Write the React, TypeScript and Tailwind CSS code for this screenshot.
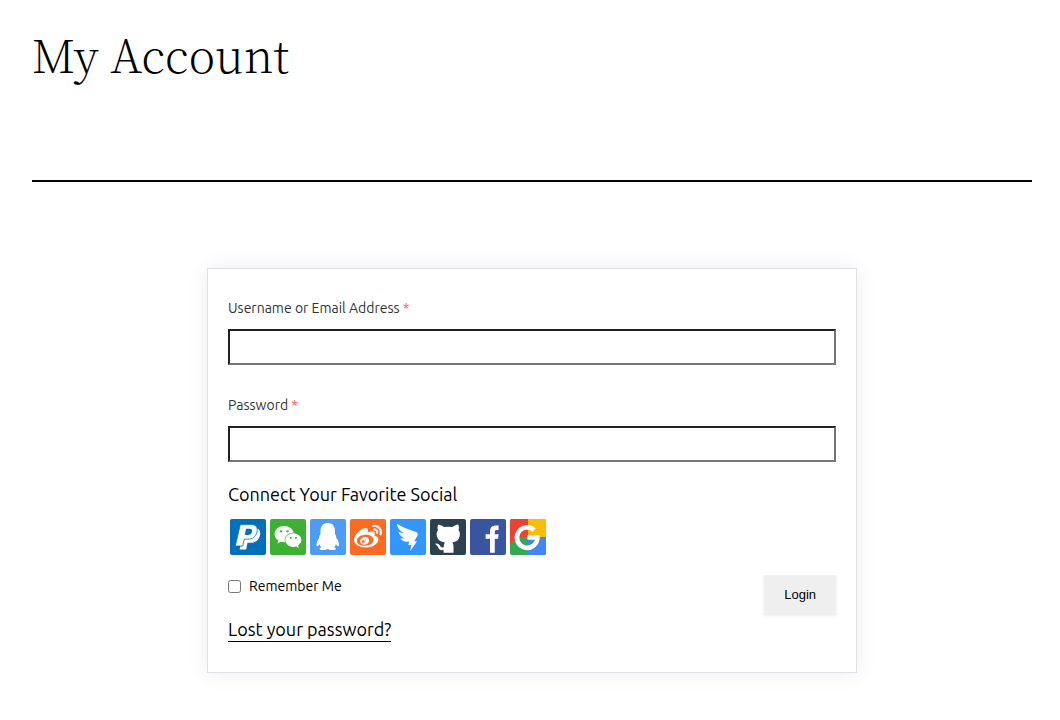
import type { ReactNode } from "react";
import { FaWeibo, FaWeixin } from "react-icons/fa";

function Tile({ name, color, children }: { name: string; color: string; children: ReactNode }) {
  return (
    <a href="#" aria-label={name} className={`block size-9 overflow-hidden rounded-xs ${color}`}>
      {children}
    </a>
  );
}

function SocialLinks() {
  return (
    <div className="flex gap-1 px-0.5">
      <Tile name="PayPal" color="bg-[#0070ba]">
        <svg viewBox="0 0 36 36" className="size-9" fill="#fff">
          <path d="M14.5 9H24C29 9 31 11.6 30 16.3C29 21.5 25.5 23.8 20.5 23.8H17.5L16.2 30.5H9.6Z" />
          <path
            d="M10.3 5.4H20.8C26 5.4 28 8.2 27 12.8C26 18 22.6 20.2 17.5 20.2H14.2L12.8 27H5.3Z"
            stroke="#0070ba"
            strokeWidth="0.8"
          />
          <path d="M16 9.8H19.3C21.7 9.8 22.4 11 22 12.8C21.5 15.2 20.1 16 17.8 16H14.8Z" fill="#0070ba" />
        </svg>
      </Tile>
      <Tile name="WeChat" color="bg-[#3eb135]">
        <div className="flex size-9 items-center justify-center">
          <FaWeixin size={28} color="#fff" />
        </div>
      </Tile>
      <Tile name="QQ" color="bg-[#4c9bf5]">
        <svg viewBox="0 0 36 36" className="size-9" fill="#fff">
          <path d="M17.8 4C22.5 4 25 7.5 25 12V15C26 16.2 26.4 17.5 26.2 18.7C28 21 29 23.3 29 25.5C29 27 28.3 27.7 27.3 26.9L26 25.3C25.6 26.5 25 27.5 24.2 28.3C27 29.6 26.5 31 22.5 31C20.3 31 18.6 30.5 17.8 30C17 30.5 15.2 31 13 31C9 31 8.6 29.6 11.4 28.3C10.5 27.5 9.9 26.5 9.5 25.3L8.2 26.9C7.2 27.7 6.5 27 6.5 25.5C6.5 23.3 7.5 21 9.3 18.7C9.1 17.5 9.5 16.2 10.5 15V12C10.5 7.5 13.1 4 17.8 4Z" />
        </svg>
      </Tile>
      <Tile name="Weibo" color="bg-[#ff6a22]">
        <div className="flex size-9 items-center justify-center">
          <FaWeibo size={28} color="#fff" />
        </div>
      </Tile>
      <Tile name="DingTalk" color="bg-[#3296fa]">
        <svg viewBox="0 0 36 36" className="size-9" fill="#fff">
          <path d="M7.1 4.8C12 8.6 21 11 26.2 13.1C28 13.9 28.1 15.4 27.3 17L24.2 22.3H27L20 32.2L21.4 26H18.2L19.3 22.4C14.6 23.2 12 21.9 10.6 19.5L15 19.2C11.6 18 9.2 15.9 8.4 12.9L14.5 14.4C10 12.2 7 8.9 7.1 4.8Z" />
        </svg>
      </Tile>
      <Tile name="GitHub" color="bg-[#2b414d]">
        <svg viewBox="0 0 36 36" className="size-9" fill="#fff">
          <path d="M8.2 5.5C10.6 5.8 12.7 7 14.2 8.1Q18.2 7.2 22.3 8.1C24 6.9 26 5.8 28.3 5.5C29.2 7.8 29 9.6 28.6 11C30 12.7 30.2 15 29.5 17.8C28.8 21.2 26.2 22.9 22.2 23.5C23.1 24.4 23.5 25.5 23.5 27V33.8H13.6V31C9.7 31.7 8.8 29.7 8 27.9C7.5 26.8 6.8 26.2 5.5 25.4V24.6C8 24.2 9.3 25.4 10.2 27C11 28.4 12.2 28.7 13.7 28.2C13.8 26.4 14 24.5 15 23.5C10.7 22.9 7.9 21.2 7 17.8C6.3 15 6.6 12.7 8 11C7.4 9.3 7.4 7.4 8.2 5.5Z" />
        </svg>
      </Tile>
      <Tile name="Facebook" color="bg-[#3a559f]">
        <svg viewBox="0 0 36 36" className="size-9" fill="#fff">
          <path d="M20 33.7V19.7H15.6V15.3H20V12.5C20 8.5 22.2 6.5 26 6.5H28.6V11H26.5C25.1 11 24.8 11.7 24.8 13V15.3H28.6L28.1 19.7H24.8V33.7Z" />
        </svg>
      </Tile>
      <Tile name="Google" color="bg-[#34a853]">
        <svg viewBox="0 0 36 36" className="size-9">
          <path d="M0 0H18V18H9L0 25Z" fill="#ea4335" />
          <path d="M18 0H36V18H18Z" fill="#fbbc05" />
          <path d="M18 18H36V36H18Z" fill="#4285f4" />
          <path
            d="M24.2 11.2A10.2 10.2 0 1 0 27.4 18.5H17.5"
            fill="none"
            stroke="#fff"
            strokeWidth="4.6"
          />
        </svg>
      </Tile>
    </div>
  );
}

function Field({ id, label, type }: { id: string; label: string; type: string }) {
  return (
    <div className="flex flex-col gap-[9px]">
      <label htmlFor={id} className="text-sm leading-6 text-[#333]">
        {label} <span className="text-[#ff5b5b]">*</span>
      </label>
      <input
        id={id}
        type={type}
        className="h-9 w-full border-2 border-t-[#212121] border-r-[#767676] border-b-[#767676] border-l-[#212121] bg-white px-2 text-base outline-none"
      />
    </div>
  );
}

export default function App() {
  return (
    <div className="bg-white pr-7 pb-12 pl-8 font-['Ubuntu','Noto_Sans',sans-serif] text-black">
      <header className="border-b-2 border-black pt-6 pb-24">
        <h1 className="font-['Source_Serif_Pro','Noto_Serif_CJK_SC','Noto_Serif_CJK_JP','Liberation_Serif',serif] text-[45px] leading-15 font-extralight">
          My Account
        </h1>
      </header>
      <main className="pt-[86px]">
        <form
          onSubmit={(event) => event.preventDefault()}
          className="mx-auto max-w-[650px] border border-[#dfdfec] px-5 pt-[27px] pb-[30px] shadow-[0_0_20px_rgba(0,0,0,0.08)]"
        >
          <div className="flex flex-col gap-7">
            <Field id="username" label="Username or Email Address" type="text" />
            <Field id="password" label="Password" type="password" />
          </div>
          <h2 className="mt-[18px] mb-[11px] text-lg leading-7">Connect Your Favorite Social</h2>
          <SocialLinks />
          <div className="mt-5 flex items-start justify-between">
            <label className="flex items-center gap-2 text-sm leading-[22px]">
              <input type="checkbox" className="size-[13px]" />
              Remember Me
            </label>
            <button
              type="submit"
              className="h-10 bg-[#efefef] px-5 font-['Liberation_Sans',sans-serif] text-[13px] shadow-[0_1px_3px_rgba(0,0,0,0.08)]"
            >
              Login
            </button>
          </div>
          <a href="#" className="mt-0.5 inline-block border-b border-black text-lg leading-6">
            Lost your password?
          </a>
        </form>
      </main>
    </div>
  );
}
